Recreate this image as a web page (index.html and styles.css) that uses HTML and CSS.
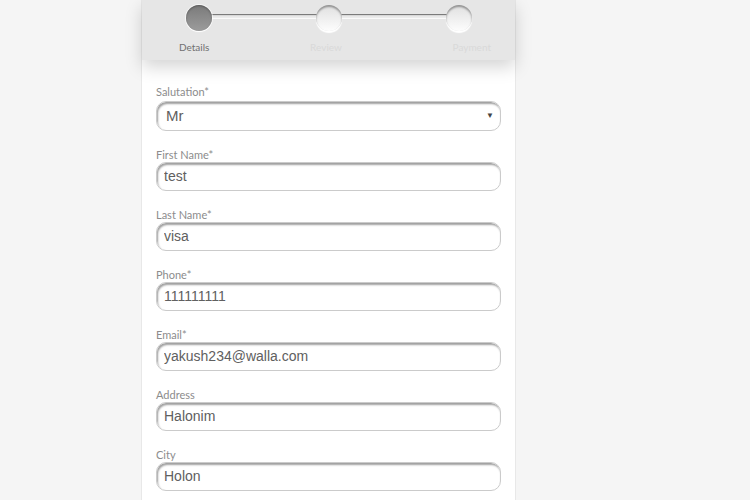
FILE: index.html
```html
<!DOCTYPE html>
<html>
<head>
<meta charset="utf-8">
<link rel="stylesheet" href="styles.css">
</head>
<body>
<div class="card">
  <div class="header">
    <div class="steps">
      <div class="track"></div>
      <span class="dot done"></span>
      <span class="dot"></span>
      <span class="dot"></span>
    </div>
    <div class="step-labels">
      <span class="step-label active">Details</span>
      <span class="step-label">Review</span>
      <span class="step-label">Payment</span>
    </div>
  </div>
  <form class="form">
    <div class="field first">
      <label class="label">Salutation*</label>
      <div class="select-wrap">
        <select class="control select"><option>Mr</option><option>Mrs</option><option>Ms</option></select>
        <span class="arrow">&#9660;</span>
      </div>
    </div>
    <div class="field">
      <label class="label">First Name*</label>
      <input class="control" type="text" value="test">
    </div>
    <div class="field">
      <label class="label">Last Name*</label>
      <input class="control" type="text" value="visa">
    </div>
    <div class="field">
      <label class="label">Phone*</label>
      <input class="control" type="text" value="111111111">
    </div>
    <div class="field">
      <label class="label">Email*</label>
      <input class="control" type="text" value="yakush234@walla.com">
    </div>
    <div class="field">
      <label class="label">Address</label>
      <input class="control" type="text" value="Halonim">
    </div>
    <div class="field">
      <label class="label">City</label>
      <input class="control" type="text" value="Holon">
    </div>
  </form>
</div>
</body>
</html>
```
FILE: styles.css
```css
html, body {
  margin: 0;
  padding: 0;
}
body {
  background: #f5f5f5;
  font-family: "Liberation Sans", Arial, sans-serif;
  height: 500px;
  overflow: hidden;
}
.card {
  margin-left: 141px;
  width: 373px;
  min-height: 500px;
  background: #fff;
  border-left: 1px solid #e8e8e8;
  border-right: 1px solid #e8e8e8;
}
.header {
  position: relative;
  z-index: 1;
  height: 60px;
  background: #e6e6e6;
  box-shadow: 0 7px 16px rgba(0,0,0,0.17);
  box-sizing: border-box;
  padding-top: 5px;
}
.steps {
  position: relative;
  display: flex;
  justify-content: space-between;
  margin-left: 44px;
  width: 286px;
  height: 26px;
}
.track {
  position: absolute;
  left: 13px;
  right: 13px;
  top: 9px;
  height: 4px;
  background: linear-gradient(#dedede, #eeeeee);
  box-shadow: inset 0 1px 1px rgba(0,0,0,0.5), 0 1px 0 rgba(255,255,255,0.8);
}
.dot {
  position: relative;
  width: 26px;
  height: 26px;
  border-radius: 50%;
  background: linear-gradient(#e0e0e0, #fdfdfd);
  box-shadow: inset 0 2px 2px rgba(0,0,0,0.35), 0 2px 1px #fff;
}
.dot.done {
  background: linear-gradient(#7a7a7a, #9c9c9c);
  box-shadow: inset 0 1px 2px rgba(0,0,0,0.3), 0 1px 1px #fff, 0 0 0 1px rgba(255,255,255,0.6);
}
.step-labels {
  display: flex;
  justify-content: space-between;
  margin-left: 37px;
  width: 312px;
  margin-top: 10px;
  font-family: Lato, "Open Sans", sans-serif;
  font-size: 10px;
  line-height: 12px;
  color: #d9d9d9;
}
.step-label:nth-child(2) {
  margin-right: 10px;
}
.step-label.active {
  color: #707070;
}
.form {
  padding: 26px 14px 0 14px;
}
.field {
  display: flex;
  flex-direction: column;
  margin-bottom: 18px;
}
.label {
  font-family: Lato, "Open Sans", sans-serif;
  font-size: 11px;
  line-height: 12px;
  color: #8c8c8c;
  margin-bottom: 1px;
}
.control {
  box-sizing: border-box;
  width: 345px;
  height: 29px;
  margin: 0;
  padding: 0 7px 1px 7px;
  border: 1px solid #cbcbcb;
  border-radius: 10px;
  background: #fff;
  box-shadow: inset 1px 2px 2px rgba(0,0,0,0.38);
  font-family: "Liberation Sans", Arial, sans-serif;
  font-size: 14px;
  color: #606060;
  outline: none;
}
.select-wrap {
  position: relative;
  margin-top: 2px;
}
.select {
  -webkit-appearance: none;
  appearance: none;
  height: 30px;
  padding: 0 9px 1px 9px;
  font-size: 15px;
}
.arrow {
  position: absolute;
  right: 7px;
  top: 10px;
  font-size: 8px;
  line-height: 10px;
  color: #444;
  pointer-events: none;
}
```
